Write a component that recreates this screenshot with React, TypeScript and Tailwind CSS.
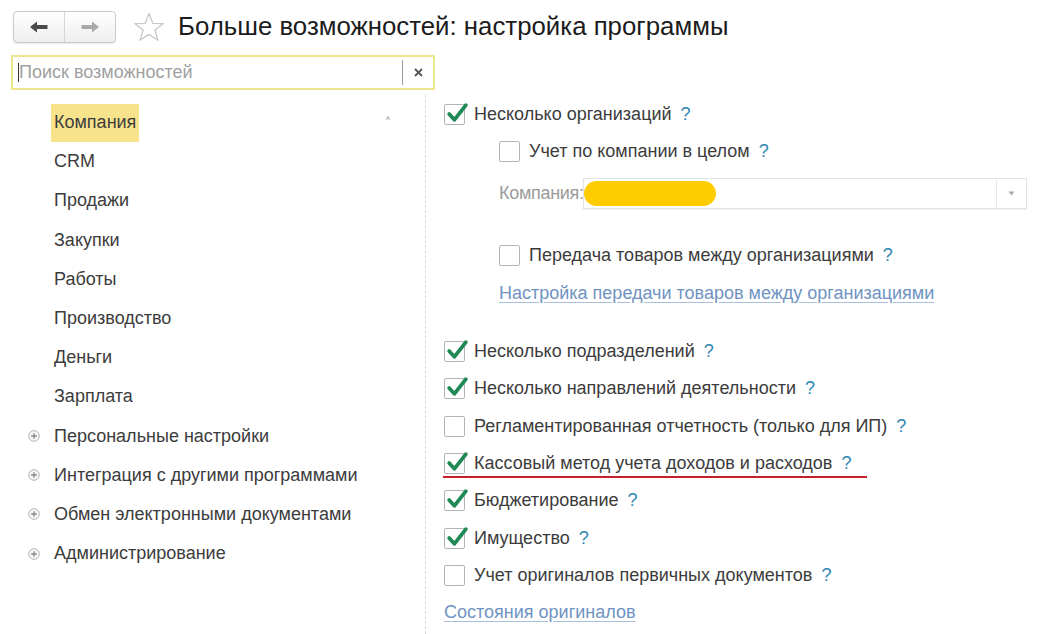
import React from "react";

const font = { fontFamily: '"Liberation Sans", Arial, sans-serif' };

function Check({ checked }: { checked: boolean }) {
  return (
    <span className="relative inline-block w-[21px] h-[21px] shrink-0 rounded-[2px] border border-[#b4b4b4] bg-white">
      {checked && (
        <svg className="absolute left-[1px] top-[-4px]" width="23" height="23" viewBox="0 0 22 22">
          <path d="M3 12.5 L8 18 L19 4" fill="none" stroke="#1f8a55" strokeWidth="3.6" strokeLinecap="round" strokeLinejoin="round" />
        </svg>
      )}
    </span>
  );
}

function Q() {
  return <span className="ml-[9px] text-[#2f86b3]">?</span>;
}

function PlusIcon() {
  return (
    <svg width="12" height="12" viewBox="0 0 12 12" className="shrink-0">
      <circle cx="6" cy="6" r="5.3" fill="#f6f6f6" stroke="#b5b5b5" strokeWidth="1" />
      <path d="M6 3.2 V8.8 M3.2 6 H8.8" stroke="#888" strokeWidth="1.3" />
    </svg>
  );
}

const navItems = [
  { t: "Компания", active: true },
  { t: "CRM" },
  { t: "Продажи" },
  { t: "Закупки" },
  { t: "Работы" },
  { t: "Производство" },
  { t: "Деньги" },
  { t: "Зарплата" },
  { t: "Персональные настройки", plus: true },
  { t: "Интеграция с другими программами", plus: true },
  { t: "Обмен электронными документами", plus: true },
  { t: "Администрирование", plus: true },
];

function Row({ checked, text, indent = false, h = "h-[37.3px]", children }: { checked: boolean; text: string; indent?: boolean; h?: string; children?: React.ReactNode }) {
  return (
    <div className={`relative flex items-center ${h} ${indent ? "pl-[56px]" : "pl-[1px]"}`}>
      <Check checked={checked} />
      <span className="ml-[9px] text-[#3c3c3c]">{text}</span>
      <Q />
      {children}
    </div>
  );
}

export default function App() {
  return (
    <div className="w-[1042px] h-[634px] bg-white overflow-hidden text-[18px]" style={font}>
      {/* Header */}
      <div className="flex items-center pt-[11px] pl-[13px] h-[43px]">
        <div className="flex h-[32px] w-[103px] rounded-[4px] border border-[#c9c9c9] bg-gradient-to-b from-white to-[#eeeeee] shadow-[0_1px_1px_rgba(0,0,0,0.08)]">
          <div className="flex flex-1 items-center justify-center border-r border-[#d6d6d6]">
            <svg width="20" height="14" viewBox="0 0 20 14">
              <path d="M1 7 L8 1.5 V5 H18.5 V9 H8 V12.5 Z" fill="#4a4a4a" />
            </svg>
          </div>
          <div className="flex flex-1 items-center justify-center">
            <svg width="20" height="14" viewBox="0 0 20 14">
              <path d="M19 7 L12 1.5 V5 H1.5 V9 H12 V12.5 Z" fill="#a9a9a9" />
            </svg>
          </div>
        </div>
        <svg className="ml-[17px]" width="32" height="31" viewBox="0 0 32 31">
          <path d="M16 1.5 L19.8 11.3 L30.3 11.6 L22 18.1 L24.9 28.3 L16 22.4 L7.1 28.3 L10 18.1 L1.7 11.6 L12.2 11.3 Z" fill="white" stroke="#c8c8c8" strokeWidth="1.3" strokeLinejoin="round" />
        </svg>
        <div className="ml-[13px] text-[25.8px] text-[#1c1c1c] leading-none">Больше возможностей: настройка программы</div>
      </div>

      {/* Search */}
      <div className="mt-[12px] ml-[11px] flex h-[35px] w-[424px] border-2 border-[#ece68c] bg-white">
        <div className="flex flex-1 items-center pl-[5px] text-[18px] text-[#a0a0a0]">
          <span className="w-px h-[19px] bg-[#333]" />
          Поиск возможностей
        </div>
        <div className="w-px my-[3px] bg-[#9a9a9a]" />
        <div className="flex w-[30px] items-center justify-center">
          <svg width="9" height="9" viewBox="0 0 9 9">
            <path d="M1 1 L8 8 M8 1 L1 8" stroke="#555" strokeWidth="1.8" />
          </svg>
        </div>
      </div>

      {/* Body */}
      <div className="flex mt-[5px]">
        {/* Left nav */}
        <div className="relative w-[426px] pt-[8px] h-[544px] border-r border-dashed border-[#d8d8d8]">
          <svg className="absolute left-[385px] top-[20px]" width="6" height="5" viewBox="0 0 6 5">
            <path d="M3 0.5 L5.5 4.5 H0.5 Z" fill="#c4c4c4" />
          </svg>
          {navItems.map((it) => (
            <div key={it.t} className="flex items-center h-[39.2px]">
              <div className="w-[28px] flex justify-end">{it.plus ? <span className="mr-[-12px]"><PlusIcon /></span> : null}</div>
              <div className="ml-[23px]">
                <span className={`inline-flex items-center h-[38px] px-[3px] text-[#3c3c3c] ${it.active ? "bg-[#f7e38c]" : ""}`}>{it.t}</span>
              </div>
            </div>
          ))}
        </div>

        {/* Right */}
        <div className="flex-1 pl-[17px]">
          <Row checked text="Несколько организаций" h="h-[38px]" />
          <Row checked={false} text="Учет по компании в целом" indent h="h-[36px]" />
          <div className="relative flex items-center h-[48px] pl-[56px]">
            <span className="text-[#9b9b9b] w-[84px] whitespace-nowrap tracking-[-0.3px]">Компания:</span>
            <div className="flex h-[31px] w-[444px] border border-[#e2e2e2] bg-white shadow-[0_1px_1px_rgba(0,0,0,0.05)]">
              <div className="flex-1" />
              <div className="w-px bg-[#e6e6e6] my-[1px]" />
              <div className="flex w-[29px] items-center justify-center">
                <svg width="7" height="5" viewBox="0 0 7 5">
                  <path d="M0.5 0.5 H6.5 L3.5 4.5 Z" fill="#a8a8a8" />
                </svg>
              </div>
            </div>
            <div className="absolute left-[141px] top-[12px] h-[25px] w-[132px] rounded-full bg-[#ffcc00]" />
          </div>
          <div className="h-[19px]" />
          <Row checked={false} text="Передача товаров между организациями" indent h="h-[38px]" />
          <div className="flex items-center h-[38px] pl-[56px]">
            <span className="text-[#6f93c2] underline decoration-[#a9bfdc] underline-offset-[3px]">Настройка передачи товаров между организациями</span>
          </div>
          <div className="h-[21px]" />
          <Row checked text="Несколько подразделений" />
          <Row checked text="Несколько направлений деятельности" />
          <Row checked={false} text="Регламентированная отчетность (только для ИП)" />
          <Row checked text="Кассовый метод учета доходов и расходов">
            <div className="absolute left-0 top-[31px] h-[2px] w-[424px] bg-[#c8202a]" />
          </Row>
          <Row checked text="Бюджетирование" />
          <Row checked text="Имущество" />
          <Row checked={false} text="Учет оригиналов первичных документов" />
          <div className="flex items-center h-[37.3px] pl-[1px]">
            <span className="text-[#6f93c2] underline decoration-[#a9bfdc] underline-offset-[3px]">Состояния оригиналов</span>
          </div>
        </div>
      </div>
    </div>
  );
}
